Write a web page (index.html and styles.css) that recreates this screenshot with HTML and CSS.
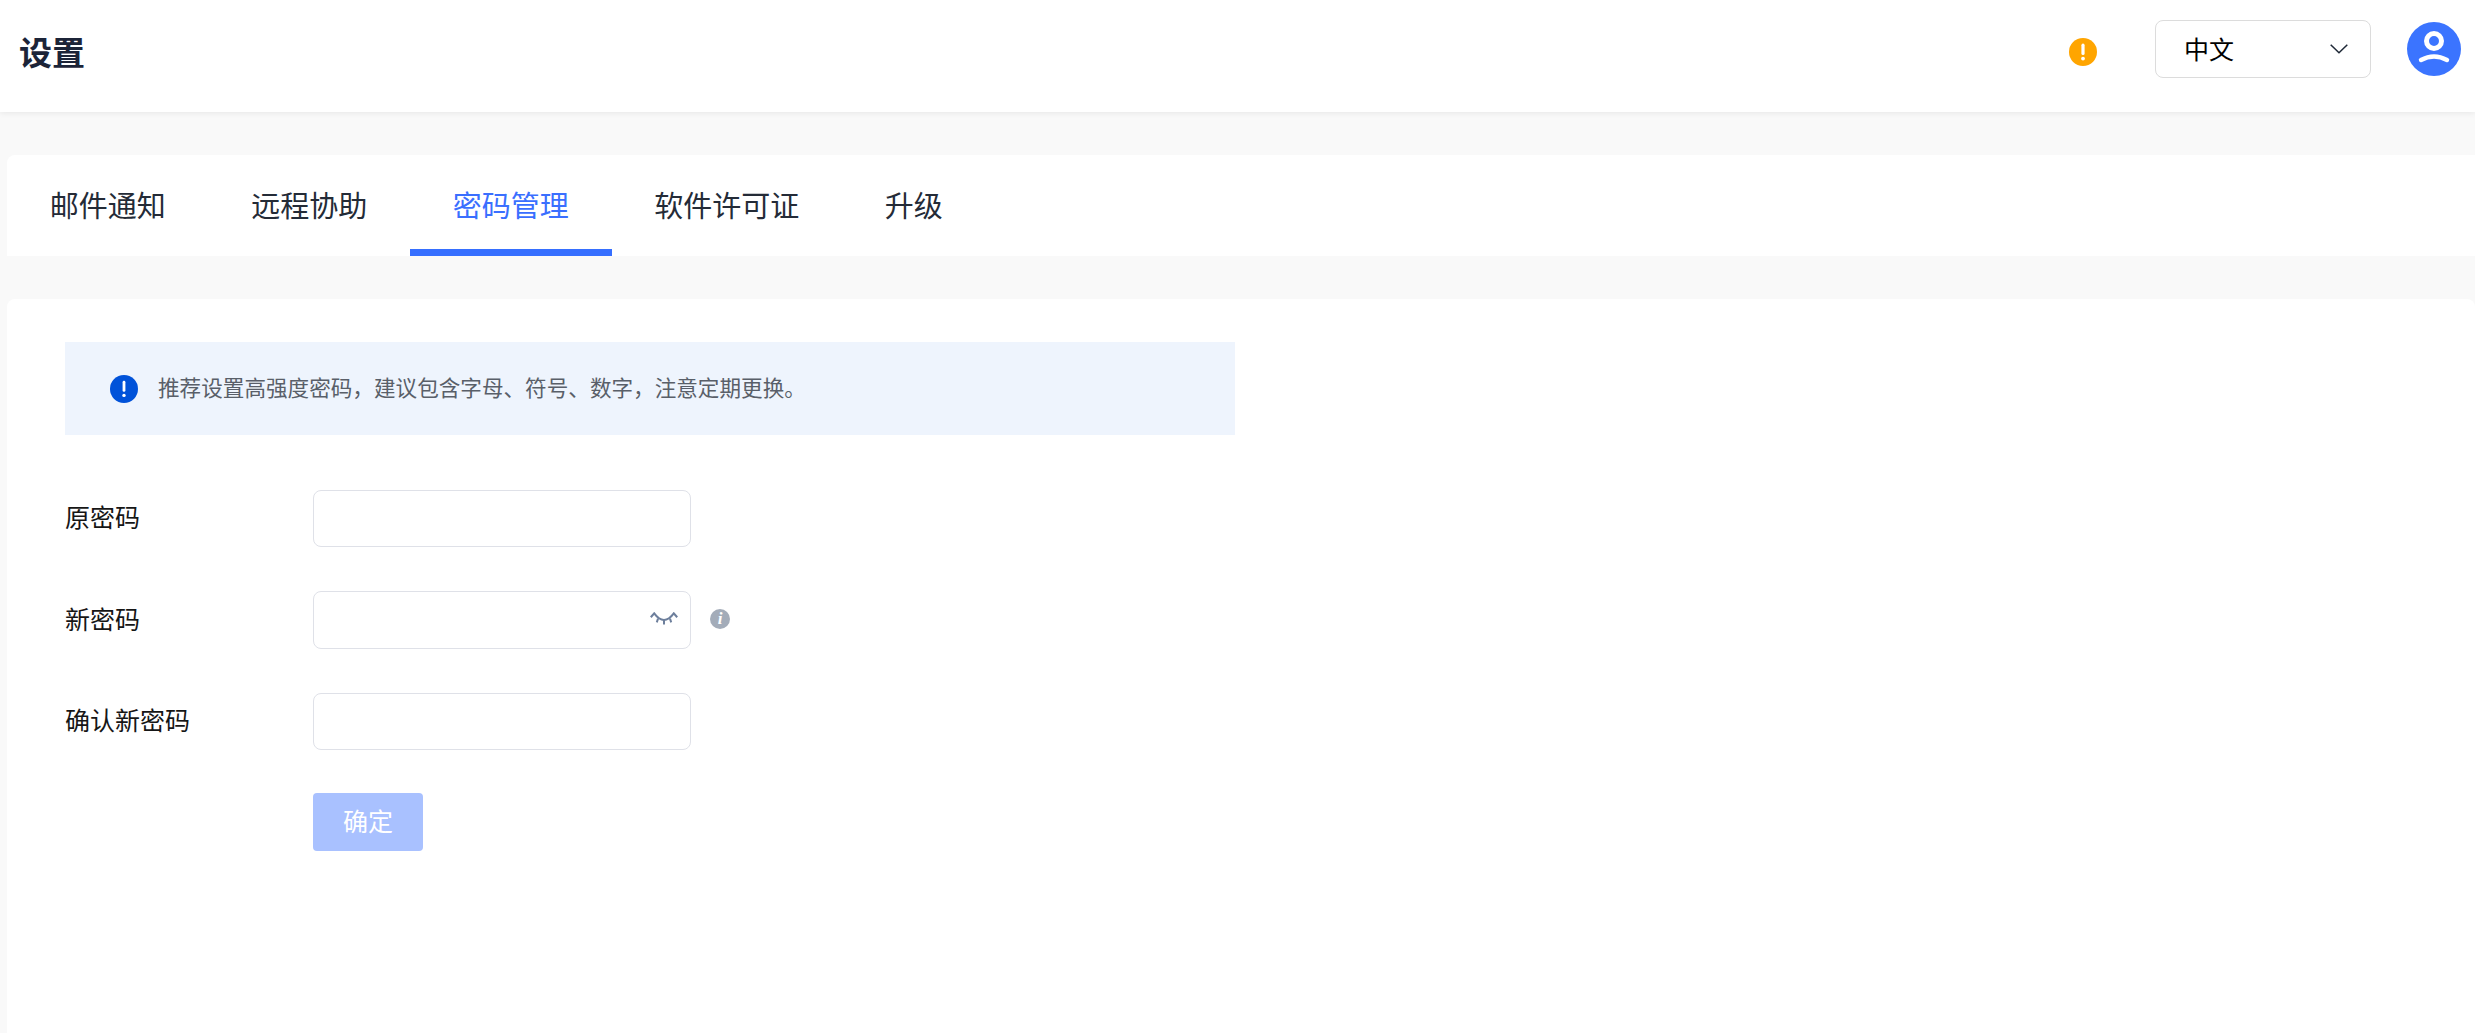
FILE: index.html
```html
<!DOCTYPE html>
<html lang="zh-CN">
<head>
<meta charset="utf-8">
<title>设置</title>
<link rel="stylesheet" href="styles.css">
</head>
<body>
<header class="topbar">
  <h1 class="title">设置</h1>
  <div class="top-actions">
    <svg class="warn-icon" viewBox="0 0 28 28"><circle cx="14" cy="14" r="14" fill="#ffa500"/><rect x="12.4" y="5.6" width="3.2" height="11.4" rx="1.6" fill="#fff"/><circle cx="14" cy="20.6" r="1.9" fill="#fff"/></svg>
    <div class="lang-select">
      <span>中文</span>
      <svg class="chevron" viewBox="0 0 18 10"><path d="M0.7 0.7 L9 8.8 L17.3 0.7" fill="none" stroke="#1f2937" stroke-width="1.5"/></svg>
    </div>
    <svg class="avatar" viewBox="0 0 54 54"><circle cx="27" cy="27" r="27" fill="#3b74ff"/><circle cx="27" cy="19" r="7.5" fill="none" stroke="#fff" stroke-width="5"/><path d="M14 38 Q27 31 40 38" fill="none" stroke="#fff" stroke-width="4.4" stroke-linecap="round"/></svg>
  </div>
</header>
<main class="main">
  <nav class="tabs">
    <a class="tab">邮件通知</a>
    <a class="tab">远程协助</a>
    <a class="tab active">密码管理</a>
    <a class="tab">软件许可证</a>
    <a class="tab">升级</a>
  </nav>
  <section class="card">
    <div class="alert">
      <svg class="alert-icon" viewBox="0 0 28 28"><circle cx="14" cy="14" r="14" fill="#0052d9"/><rect x="12.6" y="5.8" width="2.8" height="11" rx="1.4" fill="#fff"/><circle cx="14" cy="20.4" r="1.7" fill="#fff"/></svg>
      <span class="alert-text">推荐设置高强度密码，建议包含字母、符号、数字，注意定期更换。</span>
    </div>
    <form class="form">
      <div class="row">
        <label class="label">原密码</label>
        <div class="field"><input class="input" type="password"></div>
      </div>
      <div class="row">
        <label class="label">新密码</label>
        <div class="field">
          <input class="input" type="password">
          <svg class="eye" viewBox="0 0 28 13"><path d="M0.8 5.2 L4.2 1.4 C8 6.5 11 8 14 8 C17 8 20 6.5 23.8 1.4 L27.2 5.2" fill="none" stroke="#6d7f9c" stroke-width="2.1"/><path d="M8 6.6 L6.8 10.4 M14 8 L14 12.6 M20 6.6 L21.2 10.4" fill="none" stroke="#6d7f9c" stroke-width="2"/></svg>
        </div>
        <span class="hint">i</span>
      </div>
      <div class="row">
        <label class="label">确认新密码</label>
        <div class="field"><input class="input" type="password"></div>
      </div>
      <div class="row actions">
        <button class="submit" type="button">确定</button>
      </div>
    </form>
  </section>
</main>
</body>
</html>
```

FILE: styles.css
```css
* { box-sizing: border-box; }
html, body { margin: 0; height: 100%; }
body {
  background: #f9f9f9;
  font-family: "Noto Sans CJK SC", "Noto Sans", sans-serif;
  overflow: hidden;
  height: 1033px;
  display: flex;
  flex-direction: column;
}
.topbar {
  height: 112px;
  flex: none;
  background: #fff;
  box-shadow: 0 1px 6px rgba(0, 0, 0, 0.08);
  display: flex;
  align-items: center;
  justify-content: space-between;
  padding: 0 14px 14px 19px;
  position: relative;
}
.title {
  margin: 0;
  font-size: 33px;
  font-weight: 700;
  color: #1c2438;
  line-height: 1;
  position: relative;
  top: 2px;
}
.top-actions { display: flex; align-items: center; }
.warn-icon { width: 28px; height: 28px; margin-right: 58px; position: relative; top: 3px; }
.lang-select {
  width: 216px;
  height: 58px;
  border: 1px solid #dcdcdc;
  border-radius: 8px;
  display: flex;
  align-items: center;
  justify-content: space-between;
  padding: 0 22px 0 28px;
  font-size: 25px;
  color: #000;
  margin-right: 36px;
}
.lang-select span { padding-bottom: 3px; }
.chevron { width: 18px; height: 10px; }
.avatar { width: 54px; height: 54px; }
.main {
  flex: 1;
  display: flex;
  flex-direction: column;
  padding: 43px 0 0 7px;
  min-height: 0;
}
.tabs {
  height: 101px;
  flex: none;
  background: #fff;
  border-radius: 8px 0 0 0;
  display: flex;
}
.tab {
  padding: 0 42.75px;
  font-size: 29px;
  line-height: 98px;
  color: #242b37;
  border-bottom: 7px solid transparent;
  white-space: nowrap;
}
.tab.active { color: #3a6fff; border-bottom-color: #366fff; }
.card {
  flex: 1;
  margin-top: 43px;
  background: #fff;
  border-radius: 8px 8px 0 0;
  padding: 43px 58px 0;
}
.alert {
  width: 1170px;
  height: 93px;
  background: #eef4fd;
  display: flex;
  align-items: center;
  padding-left: 45px;
  font-size: 21.6px;
  color: #595f69;
  margin-bottom: 55px;
}
.alert-text { padding-bottom: 4px; }
.alert-icon { width: 28px; height: 28px; margin-right: 20px; flex: none; }
.form { display: flex; flex-direction: column; gap: 44px; }
.row { display: flex; align-items: center; height: 57.4px; }
.label { width: 248px; font-size: 25px; color: #161616; flex: none; padding-bottom: 5px; }
.field { position: relative; width: 378px; height: 100%; }
.input {
  width: 100%;
  height: 100%;
  border: 1px solid #dfe1e8;
  border-radius: 8px;
  background: #fff;
  outline: none;
  display: block;
}
.eye { position: absolute; right: 13px; top: 21px; width: 28px; height: 13px; }
.hint {
  width: 20px;
  height: 20px;
  margin-left: 19px;
  border-radius: 50%;
  background: #a3acb9;
  color: #fff;
  font: italic 700 17px/20px "Liberation Serif", serif;
  text-align: center;
  position: relative;
  top: -1px;
}
.actions { padding-left: 248px; margin-top: -1.2px; height: 58px; }
.submit {
  width: 110px;
  height: 58px;
  border: none;
  border-radius: 4px;
  background: #a9c1ff;
  color: #fff;
  font-family: inherit;
  font-size: 25px;
  padding: 0 0 3px;
}
```
